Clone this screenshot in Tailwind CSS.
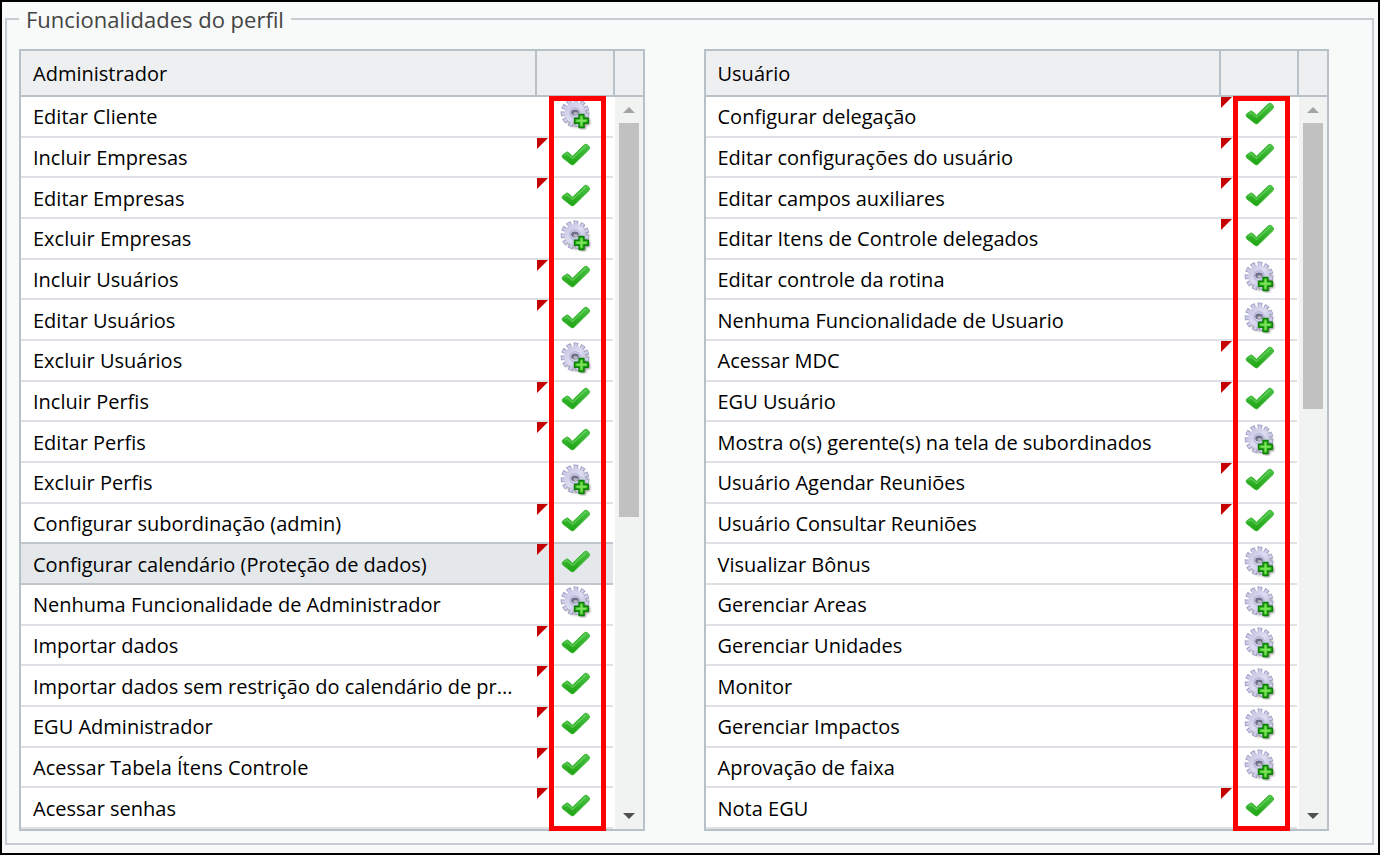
<!DOCTYPE html>
<html lang="pt-BR">
<head>
  <meta charset="UTF-8" />
  <meta name="viewport" content="width=device-width, initial-scale=1" />
  <title>Funcionalidades do perfil</title>
  <script src="https://cdn.jsdelivr.net/npm/@tailwindcss/browser@4"></script>
</head>
<body class="flex h-screen min-h-[640px] flex-col border-2 border-black bg-[#f8faf9] pt-[3px] pr-1 pb-2 pl-[3px] font-['Open_Sans',sans-serif] text-black">

  <!-- shared icons -->
  <svg class="absolute size-0" aria-hidden="true">
    <defs>
      <linearGradient id="checkFill" x1="0" y1="0" x2="0" y2="1">
        <stop offset="0" stop-color="#4cc44a" />
        <stop offset="1" stop-color="#1ea312" />
      </linearGradient>
      <linearGradient id="gearFill" x1="0" y1="0" x2="1" y2="1">
        <stop offset="0" stop-color="#c2c2e0" />
        <stop offset="0.5" stop-color="#dcdcf2" />
        <stop offset="1" stop-color="#b4b4d6" />
      </linearGradient>
      <filter id="soft" x="-20%" y="-20%" width="140%" height="140%">
        <feGaussianBlur stdDeviation="1" />
      </filter>
    </defs>
    <symbol id="check" viewBox="0 0 32 32">
      <path d="M2.5 16 L6.5 13.2 Q7.6 12.7 8.5 13.5 L12.5 17.2 L24.5 5.7 Q26 4.7 27.4 5.7 L29.2 7.7 Q30 9.1 29 10.5 L14.2 25.1 Q12.4 26.7 10.6 25.1 L2.6 18.7 Q1.8 17.5 2.5 16Z" fill="url(#checkFill)" stroke="#3db836" stroke-width="1" />
      <path d="M4.5 16.3 L7.2 14.7 L12.6 19.5 L26 6.9" fill="none" stroke="#7be070" stroke-width="1.2" opacity="0.6" />
    </symbol>
    <symbol id="gear" viewBox="0 0 32 32">
      <g filter="url(#soft)" opacity="0.55">
        <circle cx="17" cy="17.5" r="12" fill="#77777f" />
        <path d="M20 17h6v4h4v6h-4v4h-6v-4h-4v-6h4z" fill="#333" />
      </g>
      <circle cx="15" cy="14.8" r="12.3" fill="none" stroke="#9696be" stroke-width="4" stroke-dasharray="4.6 2.42" />
      <circle cx="15" cy="14.8" r="11.9" fill="none" stroke="#cdcde8" stroke-width="3.4" stroke-dasharray="3 3.79" stroke-dashoffset="-0.7" />
      <circle cx="15" cy="14.8" r="10.6" fill="url(#gearFill)" />
      <circle cx="15" cy="14.8" r="5" fill="none" stroke="#b8b8d8" stroke-width="1.5" />
      <ellipse cx="15" cy="14.5" rx="3.8" ry="3" fill="#6e6e88" />
      <ellipse cx="15.6" cy="15.6" rx="2.4" ry="1.6" fill="#b4b4be" />
      <path d="M19 16.500h5v3.800h4.300v5H24v4.200h-5v-4.200h-4.500v-5H19z" fill="#2fb51d" stroke="#0c8006" stroke-width="1.4" stroke-linejoin="round" />
      <path d="M21.500 18.300v9.400M16.500 22.800h10" stroke="#7fe45c" stroke-width="2" />
    </symbol>
    <symbol id="corner" viewBox="0 0 11 11">
      <path d="M0 0h11L0 11z" fill="#c40000" />
    </symbol>
  </svg>

  <fieldset class="flex min-h-0 min-w-0 flex-1 gap-[59px] border-2 border-[#c6ccd2] pt-4 pr-[43px] pb-3 pl-3">
    <legend class="px-[7px] text-[22px] leading-7 text-[#444]">Funcionalidades do perfil</legend>
    <div id="admin" class="relative min-w-0 flex-1"></div>
    <div id="user" class="relative min-w-0 flex-1"></div>
  </fieldset>

  <script>
    // [name, granted]
    const admin = [
      ['Editar Cliente', 0],
      ['Incluir Empresas', 1],
      ['Editar Empresas', 1],
      ['Excluir Empresas', 0],
      ['Incluir Usuários', 1],
      ['Editar Usuários', 1],
      ['Excluir Usuários', 0],
      ['Incluir Perfis', 1],
      ['Editar Perfis', 1],
      ['Excluir Perfis', 0],
      ['Configurar subordinação (admin)', 1],
      ['Configurar calendário (Proteção de dados)', 1],
      ['Nenhuma Funcionalidade de Administrador', 0],
      ['Importar dados', 1],
      ['Importar dados sem restrição do calendário de pr...', 1],
      ['EGU Administrador', 1],
      ['Acessar Tabela Ítens Controle', 1],
      ['Acessar senhas', 1],
    ];
    const user = [
      ['Configurar delegação', 1],
      ['Editar configurações do usuário', 1],
      ['Editar campos auxiliares', 1],
      ['Editar Itens de Controle delegados', 1],
      ['Editar controle da rotina', 0],
      ['Nenhuma Funcionalidade de Usuario', 0],
      ['Acessar MDC', 1],
      ['EGU Usuário', 1],
      ['Mostra o(s) gerente(s) na tela de subordinados', 0],
      ['Usuário Agendar Reuniões', 1],
      ['Usuário Consultar Reuniões', 1],
      ['Visualizar Bônus', 0],
      ['Gerenciar Areas', 0],
      ['Gerenciar Unidades', 0],
      ['Monitor', 0],
      ['Gerenciar Impactos', 0],
      ['Aprovação de faixa', 0],
      ['Nota EGU', 1],
    ];

    function scrollbar(rows, thumb) {
      return `<td rowspan="${rows}" class="relative p-0">
        <div class="absolute inset-y-0 right-0 left-0.5 flex flex-col items-center bg-[#f1f2f2]">
          <button aria-label="Rolar para cima" class="flex h-[26px] w-full shrink-0 items-center justify-center">
            <svg class="h-1.5 w-3" viewBox="0 0 12 6"><path d="M0 6L6 0l6 6z" fill="#a3a3a3" /></svg>
          </button>
          <div class="min-h-0 w-full flex-1 pl-1">
            <div class="w-5 bg-[#c1c1c1]" style="height: ${thumb}%"></div>
          </div>
          <button aria-label="Rolar para baixo" class="flex h-[26px] w-full shrink-0 items-center justify-center">
            <svg class="h-1.5 w-3" viewBox="0 0 12 6"><path d="M0 0h12L6 6z" fill="#505050" /></svg>
          </button>
        </div>
      </td>`;
    }

    function drawTable(id, title, items, thumb, selected = -1) {
      const rows = items.map(([name, on], i) => {
        const line = i === selected || i === selected - 1 ? 'border-[#c0c6cc]' : 'border-[#dde1e5]';
        return `<tr class="${i === selected ? 'bg-[#e4e8eb]' : 'bg-white'}">
          <td class="truncate border-b-2 ${line} pt-0.5 pr-2 pb-0 pl-3 leading-7">${name}</td>
          <td class="relative border-b-2 ${line} p-0">
            ${on ? '<svg class="absolute top-0 left-0.5 size-[11px]"><use href="#corner" /></svg>' : ''}
            <button aria-label="${on ? 'Remover' : 'Adicionar'}: ${name}" class="ml-[25px] block pb-1">
              <svg class="size-8"><use href="#${on ? 'check' : 'gear'}" /></svg>
            </button>
          </td>
          ${i === 0 ? scrollbar(items.length, thumb) : ''}
        </tr>`;
      }).join('');

      document.getElementById(id).innerHTML = `
        <table class="h-full w-full table-fixed border-separate border-spacing-0 border-2 border-[#b8c0c8] text-left text-[20px]">
          <colgroup><col /><col class="w-[78px]" /><col class="w-[30px]" /></colgroup>
          <thead>
            <tr class="h-[46px] bg-[#eeeff1]">
              <th class="border-b-2 border-[#b8c0c8] pt-0.5 pr-2 pb-0 pl-3 font-normal">${title}</th>
              <th class="border-b-2 border-l-2 border-[#b8c0c8] p-0" aria-label="Permissão"></th>
              <th class="border-b-2 border-l-2 border-[#b8c0c8] p-0" aria-label="Rolagem"></th>
            </tr>
          </thead>
          <tbody>${rows}</tbody>
        </table>
        <div class="pointer-events-none absolute top-[47px] right-[39px] bottom-0 w-[57px] border-5 border-[#ff0000]"></div>`;
    }

    drawTable('admin', 'Administrador', admin, 58, 11);
    drawTable('user', 'Usuário', user, 42);
  </script>
</body>
</html>
